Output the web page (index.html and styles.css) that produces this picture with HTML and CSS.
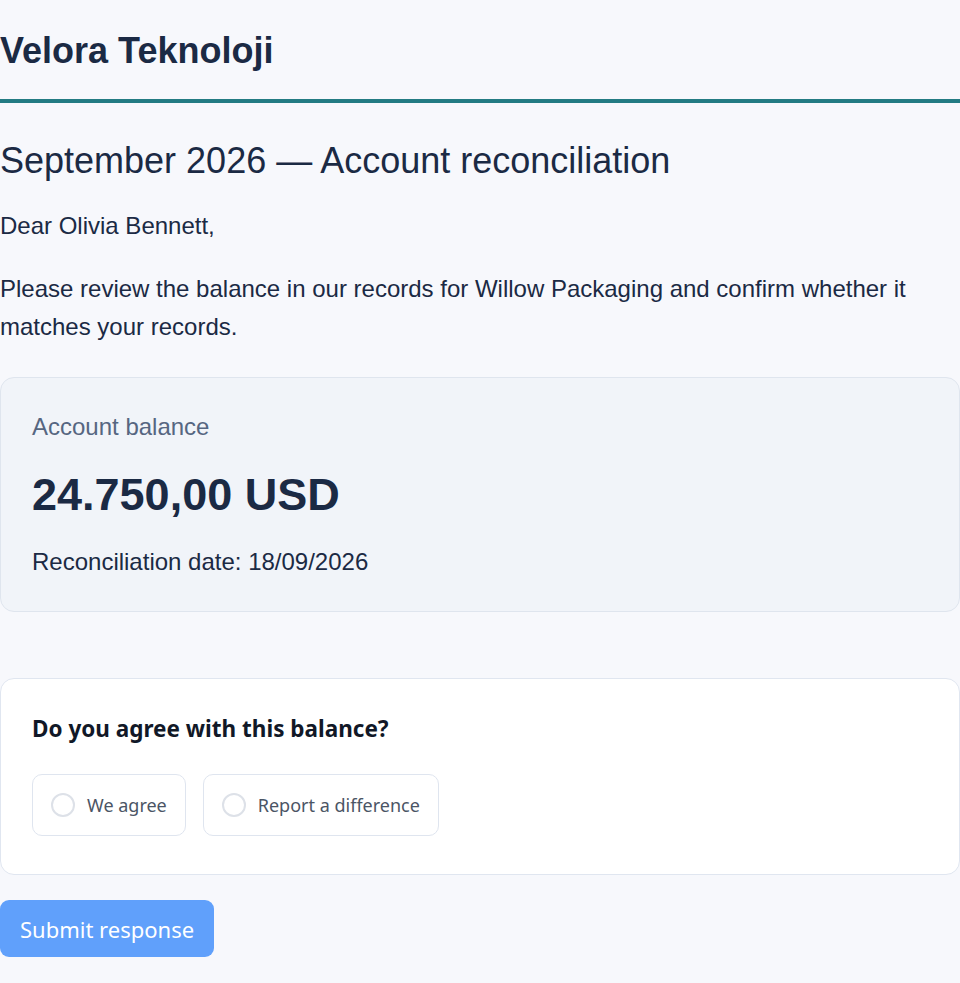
FILE: index.html
```html
<!DOCTYPE html>
<html lang="en">
<head>
    <meta charset="UTF-8">
    <meta name="viewport" content="width=device-width, initial-scale=1.0">
    <title>Account reconciliation</title>
    <link rel="stylesheet" href="styles.css">
</head>
<body>
    <header class="brand">
        <h1>Velora Teknoloji</h1>
    </header>

    <main class="letter">
        <h2>September 2026 — Account reconciliation</h2>
        <p>Dear Olivia Bennett,</p>
        <p>Please review the balance in our records for Willow Packaging and confirm whether it matches your records.</p>

        <!-- Balance summary -->
        <section class="balance-card">
            <div class="balance-label">Account balance</div>
            <div class="balance-amount">24.750,00 USD</div>
            <div class="balance-date">Reconciliation date: 18/09/2026</div>
        </section>

        <!-- Response form -->
        <form class="response-card">
            <div class="question">Do you agree with this balance?</div>
            <div class="options">
                <label class="option">
                    <input type="radio" name="answer" value="agree">
                    <span>We agree</span>
                </label>
                <label class="option">
                    <input type="radio" name="answer" value="difference">
                    <span>Report a difference</span>
                </label>
            </div>
        </form>

        <button class="submit" type="button">Submit response</button>
    </main>
</body>
</html>
```

FILE: styles.css
```css
/* General Reset */
body, html {
    margin: 0;
    padding: 0;
    background: #f7f8fc;
    color: #1b2a44;
    font-family: "Liberation Sans", Arial, sans-serif;
}

/* Header */
.brand {
    border-bottom: 4px solid #237b83;
    padding: 30px 0 27px;
}

.brand h1 {
    margin: 0;
    font-size: 36px;
    line-height: 42px;
    font-weight: bold;
    color: #1b2a44;
}

/* Letter body */
.letter {
    padding-top: 34px;
}

.letter h2 {
    margin: 0 0 22px;
    font-size: 36px;
    line-height: 48px;
    font-weight: normal;
}

.letter p {
    margin: 0 0 25px;
    font-size: 24px;
    line-height: 38px;
}

/* Balance card */
.balance-card {
    margin-top: 31px;
    background: #f1f4f9;
    border: 1px solid #dfe5ee;
    border-radius: 14px;
    padding: 33px 31px 33px;
}

.balance-label {
    color: #566681;
    font-size: 24px;
    line-height: 32px;
}

.balance-amount {
    margin-top: 24px;
    font-size: 45px;
    line-height: 56px;
    font-weight: bold;
    color: #1b2a44;
}

.balance-date {
    margin-top: 23px;
    font-size: 24px;
    line-height: 32px;
}

/* Response card */
.response-card {
    margin: 66px 0 25px;
    background: #fff;
    border: 1px solid #e0e6f0;
    border-radius: 14px;
    padding: 32px 31px 38px;
    font-family: "Noto Sans", "Open Sans", sans-serif;
}

.question {
    font-size: 22.5px;
    line-height: 36px;
    font-weight: bold;
    color: #111827;
}

.options {
    display: flex;
    gap: 17px;
    margin-top: 27px;
}

.option {
    display: flex;
    align-items: center;
    gap: 12px;
    height: 60px;
    padding: 0 18px;
    border: 1px solid #dfe5ef;
    border-radius: 10px;
    color: #4b5565;
    font-size: 18px;
}

.option input {
    appearance: none;
    margin: 0;
    width: 24px;
    height: 24px;
    border: 2px solid #dde1e8;
    border-radius: 50%;
    background: #fff;
}

/* Submit */
.submit {
    display: block;
    border: none;
    border-radius: 9px;
    background: #60a0fb;
    color: #fff;
    font-family: "Noto Sans", "Open Sans", sans-serif;
    font-size: 22px;
    height: 57px;
    padding: 0 20px;
    cursor: pointer;
}
```
